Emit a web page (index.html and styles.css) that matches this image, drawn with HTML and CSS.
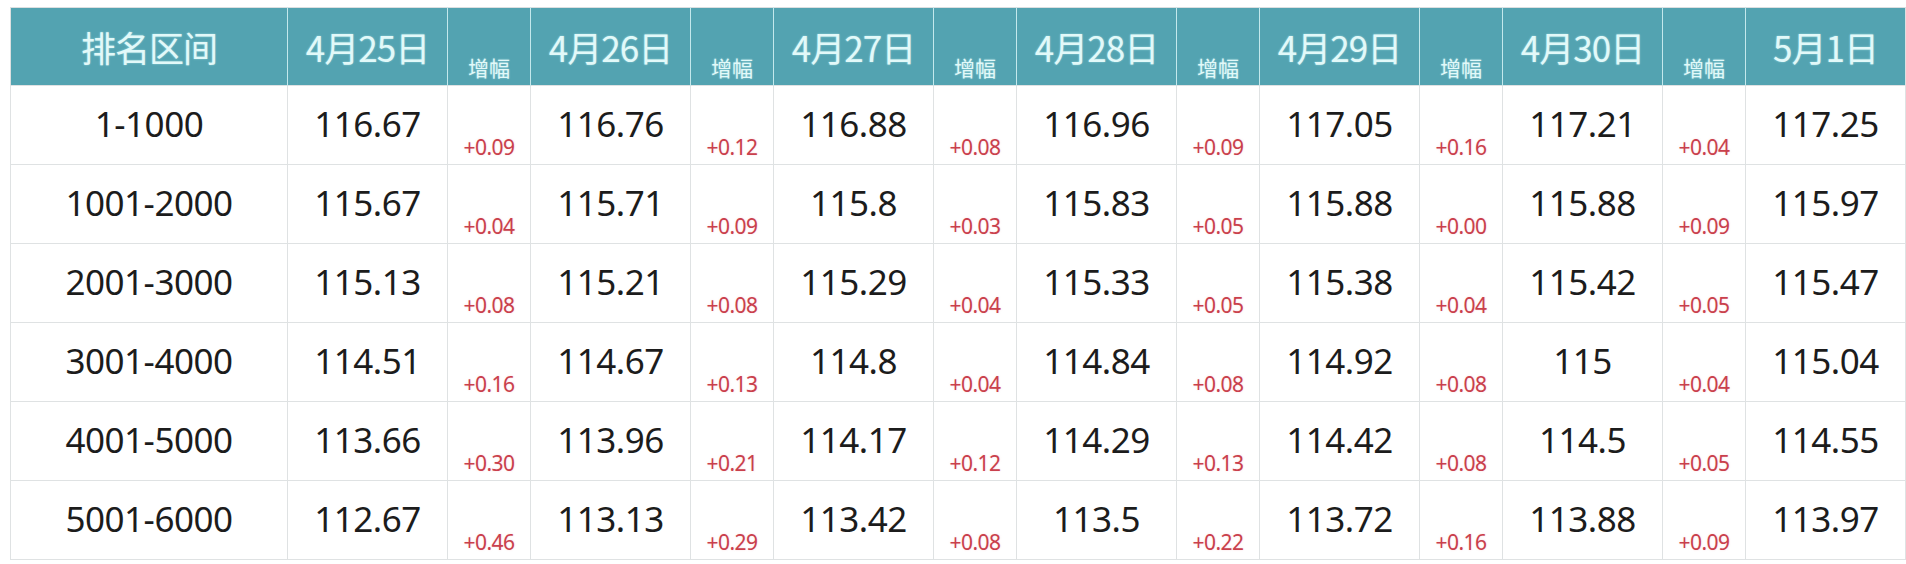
FILE: index.html
```html
<!DOCTYPE html>
<html lang="zh-CN">
<head>
<meta charset="utf-8">
<title>排名区间</title>
<link rel="stylesheet" href="styles.css">
</head>
<body>
<table class="rank-table">
  <colgroup>
    <col class="c-range">
    <col class="c-day"><col class="c-inc">
    <col class="c-day"><col class="c-inc">
    <col class="c-day"><col class="c-inc">
    <col class="c-day"><col class="c-inc">
    <col class="c-day"><col class="c-inc">
    <col class="c-day"><col class="c-inc">
    <col class="c-day">
  </colgroup>
  <thead>
    <tr>
      <th class="h-main">排名区间</th>
      <th class="h-main">4月25日</th><th class="h-inc">增幅</th>
      <th class="h-main">4月26日</th><th class="h-inc">增幅</th>
      <th class="h-main">4月27日</th><th class="h-inc">增幅</th>
      <th class="h-main">4月28日</th><th class="h-inc">增幅</th>
      <th class="h-main">4月29日</th><th class="h-inc">增幅</th>
      <th class="h-main">4月30日</th><th class="h-inc">增幅</th>
      <th class="h-main">5月1日</th>
    </tr>
  </thead>
  <tbody>
    <tr>
      <td class="val">1-1000</td>
      <td class="val">116.67</td><td class="inc">+0.09</td>
      <td class="val">116.76</td><td class="inc">+0.12</td>
      <td class="val">116.88</td><td class="inc">+0.08</td>
      <td class="val">116.96</td><td class="inc">+0.09</td>
      <td class="val">117.05</td><td class="inc">+0.16</td>
      <td class="val">117.21</td><td class="inc">+0.04</td>
      <td class="val">117.25</td>
    </tr>
    <tr>
      <td class="val">1001-2000</td>
      <td class="val">115.67</td><td class="inc">+0.04</td>
      <td class="val">115.71</td><td class="inc">+0.09</td>
      <td class="val">115.8</td><td class="inc">+0.03</td>
      <td class="val">115.83</td><td class="inc">+0.05</td>
      <td class="val">115.88</td><td class="inc">+0.00</td>
      <td class="val">115.88</td><td class="inc">+0.09</td>
      <td class="val">115.97</td>
    </tr>
    <tr>
      <td class="val">2001-3000</td>
      <td class="val">115.13</td><td class="inc">+0.08</td>
      <td class="val">115.21</td><td class="inc">+0.08</td>
      <td class="val">115.29</td><td class="inc">+0.04</td>
      <td class="val">115.33</td><td class="inc">+0.05</td>
      <td class="val">115.38</td><td class="inc">+0.04</td>
      <td class="val">115.42</td><td class="inc">+0.05</td>
      <td class="val">115.47</td>
    </tr>
    <tr>
      <td class="val">3001-4000</td>
      <td class="val">114.51</td><td class="inc">+0.16</td>
      <td class="val">114.67</td><td class="inc">+0.13</td>
      <td class="val">114.8</td><td class="inc">+0.04</td>
      <td class="val">114.84</td><td class="inc">+0.08</td>
      <td class="val">114.92</td><td class="inc">+0.08</td>
      <td class="val">115</td><td class="inc">+0.04</td>
      <td class="val">115.04</td>
    </tr>
    <tr>
      <td class="val">4001-5000</td>
      <td class="val">113.66</td><td class="inc">+0.30</td>
      <td class="val">113.96</td><td class="inc">+0.21</td>
      <td class="val">114.17</td><td class="inc">+0.12</td>
      <td class="val">114.29</td><td class="inc">+0.13</td>
      <td class="val">114.42</td><td class="inc">+0.08</td>
      <td class="val">114.5</td><td class="inc">+0.05</td>
      <td class="val">114.55</td>
    </tr>
    <tr>
      <td class="val">5001-6000</td>
      <td class="val">112.67</td><td class="inc">+0.46</td>
      <td class="val">113.13</td><td class="inc">+0.29</td>
      <td class="val">113.42</td><td class="inc">+0.08</td>
      <td class="val">113.5</td><td class="inc">+0.22</td>
      <td class="val">113.72</td><td class="inc">+0.16</td>
      <td class="val">113.88</td><td class="inc">+0.09</td>
      <td class="val">113.97</td>
    </tr>
  </tbody>
</table>
</body>
</html>
```

FILE: styles.css
```css
html, body {
  margin: 0;
  padding: 0;
  background: #ffffff;
}

body {
  padding: 7px 0 0 10px;
  font-family: "Noto Sans", "Noto Sans CJK SC", sans-serif;
}

.rank-table {
  border-collapse: collapse;
  table-layout: fixed;
  width: 1893px;
  border: 1px solid #dcdfe0;
}

.c-range { width: 277px; }
.c-day { width: 160px; }
.c-inc { width: 83px; }

.rank-table thead tr {
  height: 78px;
  background: #53a3b1;
}

.rank-table th {
  padding: 0;
  font-weight: normal;
  color: #e2f9f9;
  border-left: 1px solid #c4e8ec;
  border-right: 1px solid #c4e8ec;
  font-family: "Noto Sans CJK SC", "Noto Sans", sans-serif;
  text-shadow: 0 0 2px rgba(200, 250, 250, 0.6);
}

.rank-table th:first-child { border-left: none; }
.rank-table th:last-child { border-right: none; }

.h-main {
  font-size: 35px;
  line-height: 1;
  vertical-align: middle;
  text-align: center;
  letter-spacing: -1px;
}

.h-inc {
  font-size: 21px;
  line-height: 1;
  vertical-align: bottom;
  text-align: center;
  padding-bottom: 7px !important;
}

.rank-table tbody tr {
  height: 79px;
}

.rank-table td {
  padding: 0;
  border: 1px solid #dfe2e3;
}

.val {
  font-size: 35px;
  line-height: 1;
  color: #1c1c1c;
  text-align: center;
  vertical-align: middle;
  letter-spacing: -0.5px;
  padding-bottom: 3px !important;
}

.inc {
  font-size: 21px;
  line-height: 1;
  color: #c9404c;
  text-align: center;
  vertical-align: bottom;
  letter-spacing: -0.5px;
  padding-bottom: 6px !important;
  text-shadow: 0 0 2px rgba(240, 140, 150, 0.35);
}
```
